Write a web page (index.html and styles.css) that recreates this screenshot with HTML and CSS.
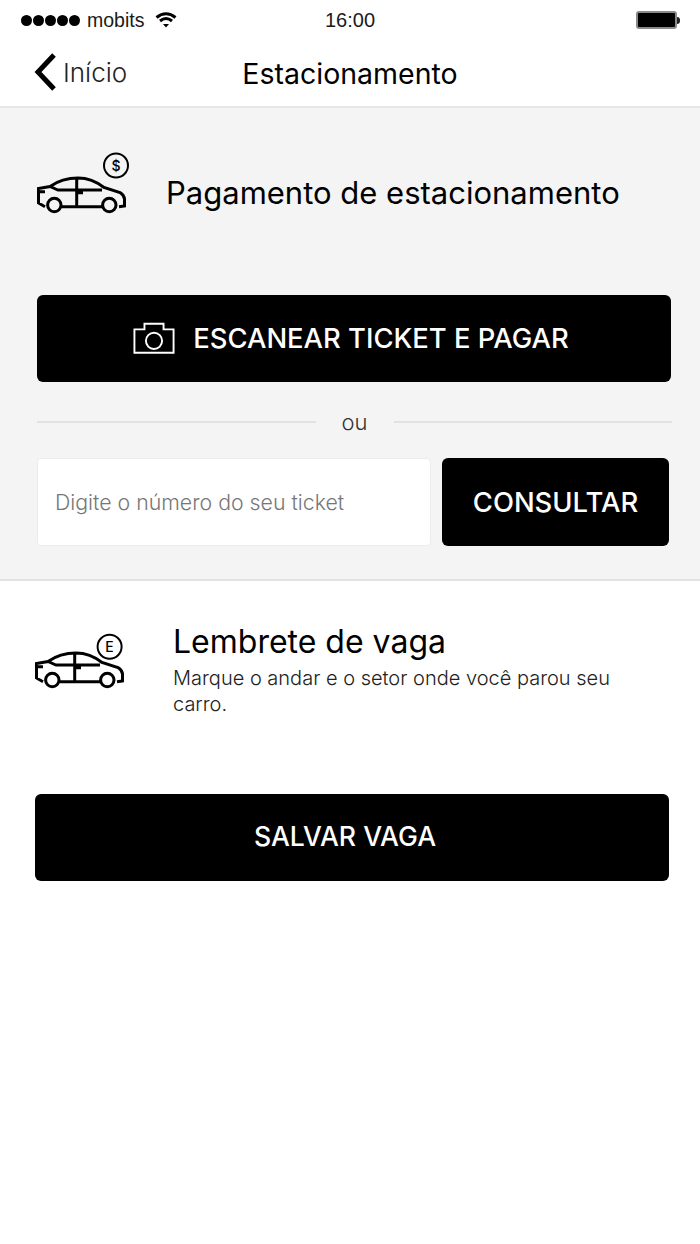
FILE: index.html
```html
<!DOCTYPE html>
<html lang="pt-BR">
<head>
<meta charset="UTF-8">
<meta name="viewport" content="width=device-width, initial-scale=1.0">
<title>Estacionamento</title>
<link rel="stylesheet" href="styles.css">
</head>
<body>
    <svg class="defs" width="0" height="0">
        <symbol id="car" viewBox="15 10 95 65">
            <path d="M25 66.700 L18.500 63 V48.500 L30 46.500 Q42 38 58 38 Q72 38 84 47.500 L100 52.500 Q104 55 104.500 59 V66 L99 66.700 M82 66.700 H42 M30 46.500 L38 50 H82 M56.700 38 V66.700 M18.500 51.700 H25 M56.700 52.700 H63"/>
            <circle cx="34.300" cy="65" r="6.700"/>
            <circle cx="89.300" cy="65" r="6.700"/>
        </symbol>
    </svg>

    <div class="status-bar">
        <div class="status-left">
            <span class="dots"><i></i><i></i><i></i><i></i><i></i></span>
            <span>mobits</span>
            <svg class="wifi" width="22" height="16" viewBox="0 0 22 16">
                <path d="M1.500 5.500 Q11 -2 20.500 5.500 M5 9 Q11 4 17 9"/>
                <polygon points="8,12 14,12 11,15.500"/>
            </svg>
        </div>
        <div class="status-time">16:00</div>
        <div class="battery"><span class="battery-body"></span><span class="battery-tip"></span></div>
    </div>

    <div class="nav-bar">
        <a class="back">
            <svg width="24" height="40" viewBox="0 0 24 40">
                <path d="M21 3 L5 20 L21 37"/>
            </svg>
            <span>Início</span>
        </a>
        <div class="nav-title">Estacionamento</div>
    </div>

    <section class="payment">
        <div class="payment-head">
            <svg class="icon-car" width="95" height="65" viewBox="0 0 95 65">
                <use href="#car"/>
                <circle class="badge" cx="81" cy="15.500" r="12"/>
                <text x="81" y="20.500" class="icon-letter">$</text>
            </svg>
            <h2>Pagamento de estacionamento</h2>
        </div>

        <button class="btn btn-scan">
            <svg width="42" height="34" viewBox="0 0 44 34">
                <path d="M1.500 32.500 V8 H12 V2 H32 V8 H42.500 V32.500 Z"/>
                <circle cx="22" cy="20" r="8.500"/>
            </svg>
            ESCANEAR TICKET E PAGAR
        </button>

        <div class="divider"><span>ou</span></div>

        <div class="ticket-row">
            <input class="ticket-input" type="text" placeholder="Digite o número do seu ticket">
            <button class="btn btn-check">CONSULTAR</button>
        </div>
    </section>

    <section class="reminder">
        <div class="reminder-head">
            <svg class="icon-car" width="95" height="65" viewBox="0 0 95 65">
                <use href="#car"/>
                <circle class="badge" cx="76.600" cy="21.700" r="12"/>
                <text x="76.600" y="27" class="icon-letter">E</text>
            </svg>
            <div class="reminder-text">
                <h3>Lembrete de vaga</h3>
                <p>Marque o andar e o setor onde você parou seu carro.</p>
            </div>
        </div>
        <button class="btn btn-save">SALVAR VAGA</button>
    </section>
</body>
</html>
```

FILE: styles.css
```css
body {
    margin: 0;
    padding: 0;
    font-family: "Inter", "Liberation Sans", sans-serif;
    background-color: #ffffff;
    color: #000;
}
.defs {
    position: absolute;
}
.status-bar {
    height: 40px;
    display: flex;
    align-items: center;
    justify-content: space-between;
    padding: 0 20px 0 21px;
    position: relative;
    font-family: "Liberation Sans", sans-serif;
    font-size: 19.500px;
    color: #1a1a1a;
}
.status-left {
    display: flex;
    align-items: center;
    gap: 7px;
}
.dots {
    display: flex;
    gap: 1px;
}
.dots i {
    width: 11px;
    height: 11px;
    border-radius: 50%;
    background-color: #000;
}
.wifi {
    margin-left: 4px;
    margin-top: -1px;
}
.wifi path {
    fill: none;
    stroke: #000;
    stroke-width: 3;
}
.status-time {
    position: absolute;
    left: 0;
    right: 0;
    text-align: center;
    font-size: 20px;
}
.battery {
    display: flex;
    align-items: center;
}
.battery-body {
    width: 37px;
    height: 14px;
    background-color: #000;
    border: 2px solid #8a8a8a;
    border-radius: 3px;
}
.battery-tip {
    width: 3px;
    height: 7px;
    background-color: #222;
    border-radius: 0 3px 3px 0;
}
.nav-bar {
    height: 66px;
    display: flex;
    align-items: center;
    position: relative;
    border-bottom: 2px solid #e6e6e6;
}
.back {
    display: flex;
    align-items: center;
    gap: 6px;
    margin-left: 33px;
    margin-top: -2px;
    font-size: 26px;
    font-weight: 300;
    color: #222;
}
.back path {
    fill: none;
    stroke: #000;
    stroke-width: 5;
}
.nav-title {
    position: absolute;
    left: 0;
    right: 0;
    text-align: center;
    font-size: 28.500px;
    font-weight: 400;
}
.payment {
    background-color: #f4f4f4;
    border-bottom: 2px solid #e2e2e2;
    padding: 42px 29px 33px 37px;
    box-sizing: border-box;
    height: 473px;
}
.payment-head {
    display: flex;
    align-items: center;
    gap: 36px;
    margin-left: -2px;
    height: 65px;
    margin-bottom: 80px;
}
.icon-car {
    flex-shrink: 0;
    fill: none;
    stroke: #000;
    stroke-width: 3;
}
.icon-car .badge {
    stroke-width: 2;
}
.icon-letter {
    font-family: "Inter", sans-serif;
    font-size: 14px;
    font-weight: 500;
    text-anchor: middle;
    fill: #000;
    stroke: none;
}
h2 {
    margin: 20px 0 0;
    font-size: 31px;
    font-weight: 400;
}
h3 {
    margin: 0;
    font-size: 32px;
    font-weight: 400;
}
.btn {
    background-color: #000;
    color: #fff;
    border: 0;
    border-radius: 6px;
    font-family: inherit;
    font-size: 27.400px;
    font-weight: 500;
    height: 87px;
    padding: 0;
}
.btn-scan {
    width: 634px;
    display: flex;
    align-items: center;
    justify-content: center;
    gap: 18px;
    padding: 0 6px 2px 0;
}
.btn-scan path, .btn-scan circle {
    fill: none;
    stroke: #fff;
    stroke-width: 2;
}
.divider {
    display: flex;
    align-items: center;
    justify-content: center;
    box-sizing: border-box;
    height: 76px;
    padding-top: 4px;
    margin-right: -1px;
    gap: 26px;
    font-size: 22px;
    font-weight: 300;
    color: #333;
}
.divider::before, .divider::after {
    content: "";
    flex: 1;
    height: 2px;
    background-color: #e2e2e2;
}
.ticket-row {
    display: flex;
    gap: 11px;
}
.ticket-input {
    width: 394px;
    height: 88px;
    box-sizing: border-box;
    border: 1px solid #ececec;
    border-radius: 4px;
    background-color: #fff;
    padding: 0 17px;
    font-family: inherit;
    font-size: 21.300px;
    font-weight: 300;
}
.ticket-input::placeholder {
    color: #777;
}
.btn-check {
    width: 227px;
    height: 88px;
}
.reminder {
    padding: 44px 31px 0 35px;
}
.reminder-head {
    display: flex;
    gap: 45px;
    margin-left: -2px;
    height: 169px;
}
.reminder-text {
    margin-top: -3px;
}
.reminder-text p {
    margin: 4px 0 0;
    font-size: 20px;
    font-weight: 300;
    line-height: 26px;
    color: #222;
}
.btn-save {
    width: 634px;
    font-size: 26.600px;
    padding: 0 14px 4px 0;
}
```
